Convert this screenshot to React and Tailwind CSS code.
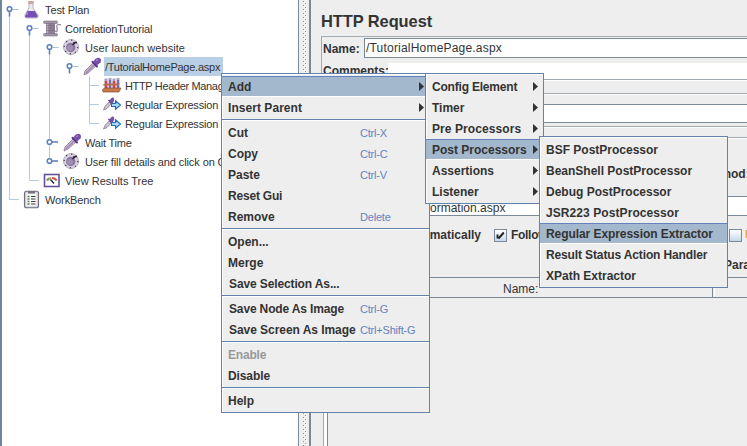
import React from "react";

function Flask() {
  return (
    <svg width="18" height="19" viewBox="0 0 18 19">
      <path d="M7 3V8L3 15Q2 18 5 18H14Q17 18 16 15L11 8V3Z" fill="#eeeaf2" stroke="#a9a0b5" strokeWidth=".8" />
      <path d="M5.4 11H12.7L15.5 15.6Q16 17.5 14 17.5H5Q2.6 17.5 3.4 15.4Z" fill="#7450b4" />
      <path d="M6 12.5L4.8 15" stroke="#b79ce0" />
      <path d="M6.2 1H11.8V4H6.2Z" fill="#c9a99b" />
    </svg>
  );
}

function Spool() {
  return (
    <svg width="20" height="19" viewBox="0 0 20 19">
      <path d="M13 12Q16 14 15 9T19 6" fill="none" stroke="#9d8fa4" strokeWidth="1.4" />
      <rect x="4" y="4" width="9" height="11" fill="#8f8096" />
      <path d="M5.5 4V15" stroke="#bdb1c2" strokeWidth="1.5" />
      <path d="M4 6.5H13M4 9H13M4 11.500H13" stroke="#75677e" strokeWidth=".6" />
      <rect x="1.500" y="2" width="14" height="2.500" rx="1" fill="#a296a9" stroke="#766b7f" strokeWidth=".6" />
      <rect x="1.500" y="14.500" width="14" height="2.500" rx="1" fill="#a296a9" stroke="#766b7f" strokeWidth=".6" />
    </svg>
  );
}

function Dial() {
  return (
    <svg width="18" height="19" viewBox="0 0 18 19">
      <circle cx="9" cy="9" r="7.600" fill="#d8d0df" stroke="#a59cae" strokeWidth=".7" />
      <circle cx="9" cy="9" r="6.800" fill="none" stroke="#352c40" strokeWidth="1.200" strokeDasharray="1.100 4.240" />
      <circle cx="8.700" cy="9.500" r="4.700" fill="#8a76a0" />
      <circle cx="8" cy="10" r="3" fill="#a08fb4" />
      <path d="M10.500 7L14.500 3.800M11 5L14.500 4.200" stroke="#241d2e" strokeWidth="1.200" />
    </svg>
  );
}

function Dropper() {
  return (
    <svg width="20" height="19" viewBox="0 0 20 19">
      <path d="M2 18L3 14L11 6L14 9L6 16Z" fill="#c6bcca" stroke="#82758d" strokeWidth=".8" />
      <path d="M4 16L12 8" stroke="#a582bc" strokeWidth="1.500" />
      <path d="M10.500 4.800L15 9.500" stroke="#55318e" strokeWidth="2" strokeLinecap="round" />
      <path d="M11.500 5Q13 .8 17 .8Q20 2 18.500 5.500L14.800 8.500Z" fill="#7650a8" />
      <path d="M14 4L16 2.500" stroke="#b79bd5" />
    </svg>
  );
}

function Tubes() {
  return (
    <svg width="20" height="19" viewBox="0 0 20 19">
      <path d="M4 2.500V14M8 2V14M12 2.500V14M16 2V14" stroke="#a9a0c0" strokeWidth="3" />
      <path d="M4 5V13M12 5V13" stroke="#d2424c" strokeWidth="2.400" />
      <path d="M8 4V13M16 4V13" stroke="#7769b5" strokeWidth="2" />
      <path d="M1 8.500L4 7.500H18L16 9.500H1Z" fill="#b86e45" />
      <path d="M.5 13.500L3 12H19L17 16H1Z" fill="#c47c4e" stroke="#8d4c31" strokeWidth=".7" />
    </svg>
  );
}

function Extract() {
  return (
    <svg width="20" height="19" viewBox="0 0 20 19">
      <path d="M1.500 15L3 11.500L7 7L9 9L5 13.500Z" fill="#cdc4d3" stroke="#83778d" strokeWidth=".8" />
      <path d="M6.500 5L11 9.500" stroke="#55338c" strokeWidth="1.500" />
      <path d="M7.500 6Q9 2 11.500 2.500Q13 5 11 8L10 9Z" fill="#7650a8" />
      <path d="M9.500 8.500H13.500V5.800L18.500 10L13.500 14.200V11.500H9.500Z" fill="#a9daf5" stroke="#2369b6" strokeWidth="1.100" />
    </svg>
  );
}

function Gauge() {
  return (
    <svg width="18" height="19" viewBox="0 0 18 19">
      <rect x="2.500" y="3.500" width="14.500" height="12" fill="#fff" stroke="#69509a" strokeWidth="1.600" />
      <path d="M5 9.500Q6.500 7.500 9 7" fill="none" stroke="#e58a4b" strokeWidth="2" />
      <path d="M5 9.500Q6 8 7 7.500" fill="none" stroke="#5aa67c" strokeWidth="2" />
      <path d="M10 7Q13 7 14.600 9.500" fill="none" stroke="#d0513e" strokeWidth="2" />
      <path d="M8.500 8.500L12 12.500" stroke="#222" strokeWidth="1.400" />
    </svg>
  );
}

function Clipboard() {
  return (
    <svg width="18" height="19" viewBox="0 0 18 19">
      <rect x="2.500" y="1.200" width="14" height="16.500" rx="2" fill="#dad7e0" stroke="#6f6b7c" strokeWidth="1.100" />
      <rect x="4.500" y="3.500" width="10" height="12.500" fill="#f8f8f6" />
      <rect x="6" y="1" width="7" height="2.500" fill="#777382" />
      <path d="M5.500 6.500H7.500M5.500 9H7.500M5.500 11.500H7.500M5.500 14H7.500" stroke="#567d50" strokeWidth="1.500" />
      <path d="M9 6.500H13.500M9 9H13.500M9 11.500H13.500M9 14H13.500" stroke="#3d3d45" strokeWidth="1.200" />
    </svg>
  );
}

const tree = [
  { icon: Flask, text: "Test Plan", pad: "pl-[22px]", fit: "tracking-[-0.1px]" },
  { icon: Spool, text: "CorrelationTutorial", pad: "pl-[42px]", fit: "tracking-[-0.15px]" },
  { icon: Dial, text: "User launch website", pad: "pl-[62px]", fit: "tracking-[0.05px]" },
  { icon: Dropper, text: "/TutorialHomePage.aspx", pad: "pl-[82px]", fit: "tracking-[-0.25px]", selected: true },
  { icon: Tubes, text: "HTTP Header Manager", pad: "pl-[102px]", fit: "tracking-[-0.35px]" },
  { icon: Extract, text: "Regular Expression Extractor", pad: "pl-[102px]", fit: "tracking-[-0.15px]" },
  { icon: Extract, text: "Regular Expression Extractor", pad: "pl-[102px]", fit: "tracking-[-0.15px]" },
  { icon: Dropper, text: "Wait Time", pad: "pl-[62px]", fit: "tracking-[-0.2px]" },
  { icon: Dial, text: "User fill details and click on Calculate", pad: "pl-[62px]", fit: "tracking-[-0.1px]" },
  { icon: Gauge, text: "View Results Tree", pad: "pl-[42px]", fit: "" },
  { icon: Clipboard, text: "WorkBench", pad: "pl-[22px]", fit: "tracking-[-0.1px]" },
];

function Connectors() {
  return (
    <svg className="absolute left-0 top-0" width="100" height="210" fill="none">
      <path
        d="M9.500 16V199.500H19M29.500 35V180.500H39M49.500 54V161M89.500 76V123.500H99M89.500 85.500H99M89.500 104.500H99"
        stroke="#b5cbd9"
      />
      {[[9.5, 9.5], [29.5, 28.5], [49.5, 47.5], [69.5, 66.5]].map(([x, y]) => (
        <g key={y}>
          <path d={`M${x + 3} ${y}H${x + 9}`} stroke="#a9bfd2" />
          <path d={`M${x} ${y + 2}V${y + 7}`} stroke="#5f83b8" strokeWidth="1.600" />
          <circle cx={x} cy={y - 0.5} r="2.300" fill="#fff" stroke="#5f83b8" strokeWidth="1.600" />
        </g>
      ))}
      {[142, 161].map((y) => (
        <g key={y}>
          <path d={`M51 ${y}H58`} stroke="#5f83b8" strokeWidth="1.600" />
          <circle cx="49.500" cy={y} r="2.300" fill="#fff" stroke="#5f83b8" strokeWidth="1.600" />
        </g>
      ))}
    </svg>
  );
}

function Tree() {
  return (
    <div className="relative h-full w-[299px] shrink-0 overflow-hidden border-r border-[#7a8a99] bg-white text-[11px]">
      <div className="absolute left-0 top-0 h-full w-[2px] bg-[#6c87a0]" />
      <Connectors />
      {tree.map(({ icon: Icon, text, pad, fit, selected }, i) => (
        <div key={i} className={`flex h-[19px] items-center ${pad}`}>
          <span className="flex w-[22px] shrink-0"><Icon /></span>
          <span className={`h-[19px] pl-px leading-[20px] ${fit} ${selected ? "bg-[#b8cfe5] pr-[3px]" : ""}`}>{text}</span>
        </div>
      ))}
    </div>
  );
}

function Splitter() {
  return (
    <div className="flex h-full w-[12px] shrink-0 border-r-2 border-[#7a8a99] bg-[#eeeeee] pl-[4px]">
      <svg width="6" height="446">
        <defs>
          <pattern id="bumps" width="4" height="4" patternUnits="userSpaceOnUse">
            <path d="M0 1h1v1H0zM2 3h1v1H2z" fill="#7f97b3" />
            <path d="M1 2h1v1H1zM3 0h1v1H3z" fill="#fff" />
          </pattern>
        </defs>
        <rect width="4" height="446" fill="url(#bumps)" />
      </svg>
    </div>
  );
}

function Check({ checked }) {
  return (
    <span className="flex size-[13px] shrink-0 items-center justify-center border border-[#7a8a99] bg-linear-to-b from-white to-[#c5d8ea]">
      {checked && (
        <svg width="9" height="9" viewBox="0 0 9 9">
          <path d="M1.500 3.500V7.500M2.500 7.500L7.800 1.500" stroke="#222" strokeWidth="1.900" />
        </svg>
      )}
    </span>
  );
}

function RequestPanel() {
  return (
    <div className="flex h-full min-w-0 flex-1 flex-col overflow-hidden whitespace-nowrap bg-[#eeeeee]">
      <div className="h-[36px] pl-[10px] text-[16.400px] font-bold leading-[42px] tracking-[-0.05px]">HTTP Request</div>
      <div className="ml-[10px] flex h-[43px] shrink-0 flex-col border-l border-t border-[#a3abb2] pl-px">
        <div className="flex h-[21px] items-start font-bold">
          <span className="w-[41px] pt-px leading-[22px]">Name:</span>
          <span className="mt-px h-[20px] flex-1 border border-r-0 border-[#7a8a99] bg-white pl-px font-normal leading-[19px] tracking-[0.2px]">/TutorialHomePage.aspx</span>
        </div>
        <div className="mt-[5px] flex h-[16px] font-bold">
          <span className="w-[65px] leading-[17px]">Comments:</span>
          <span className="flex-1 bg-white" />
        </div>
      </div>
      <div className="ml-[12px] h-[15px] shrink-0 border-y border-[#a3abb2] shadow-[inset_0_1px_#fff,0_1px_#fff]" />
      <div className="ml-[12px] mt-[10px] h-[19px] shrink-0 border-y border-[#7a8a99] bg-white" />
      <div className="ml-[12px] mt-[3px] h-[12px] shrink-0 border-y border-[#a3abb2] shadow-[inset_0_1px_#fff,0_1px_#fff]" />
      <div className="flex h-[58px] shrink-0 pl-[392px] font-bold">
        <span className="pt-[26px] leading-[20px]">Method:</span>
      </div>
      <div className="ml-[12px] h-[20px] shrink-0 border-y border-[#7a8a99] bg-white pl-[71px] leading-[22px]">/CarInformation.aspx</div>
      <div className="flex h-[38px] shrink-0 items-center pl-[63px] font-bold">
        <span className="w-[120px] shrink-0 pr-[13px] text-right">Automatically</span>
        <Check checked />
        <span className="w-[222px] shrink-0 pl-[4px] tracking-[-0.3px]">Follow Redirects</span>
        <Check />
        <span className="pl-[3px] text-[#e8a53a]">Use</span>
      </div>
      <div className="flex h-[23px] shrink-0 pl-[413px] font-bold">
        <span className="leading-[22px]">Parameters</span>
      </div>
      <div className="ml-[16px] flex h-[21px] shrink-0 border-y border-[#7a8a99]">
        <span className="w-[386px] border-r border-[#7a8a99] pl-[176px] leading-[22px]">Name:</span>
        <span className="ml-px flex-1 border-l border-white" />
      </div>
      <div className="ml-[12px] flex flex-1 border-l border-[#a3abb2] bg-white">
        <div className="ml-[3px] flex-1 border-l border-[#7a8a99] bg-[#eeeeee]" />
      </div>
    </div>
  );
}

function Item({ label, fit = "", keys, arrow, active, disabled }) {
  return (
    <div className={`flex h-[21px] items-center border-y pl-[6px] pr-[5px] font-bold ${active ? "border-t-[#6382bf] border-b-white bg-[#a3b8cc]" : "border-transparent"} ${disabled ? "text-[#999999]" : ""}`}>
      <span className={`h-[19px] leading-[20px] ${fit} ${keys ? "w-[132px]" : "flex-1"}`}>{label}</span>
      {keys && <span className="h-[19px] text-[11px] font-normal leading-[20px] tracking-[-0.2px] text-[#6382bf]">{keys}</span>}
      {arrow && (
        <svg width="5" height="9" viewBox="0 0 5 9"><path d="M0 0L5 4.500L0 9Z" fill="#333" /></svg>
      )}
    </div>
  );
}

function Menu({ place, items }) {
  return (
    <div className={`absolute whitespace-nowrap border border-[#6382ab] bg-[#eeeeee] pt-[2px] shadow-[inset_1px_1px_#fff] ${place}`}>
      {items.map((item, i) =>
        item ? <Item key={i} {...item} /> : <div key={i} className="mb-[2px] mt-px h-px bg-[#6382ab] shadow-[0_1px_#fff]" />
      )}
    </div>
  );
}

const mainMenu = [
  { label: "Add", arrow: true, active: true },
  { label: "Insert Parent", arrow: true, fit: "tracking-[0.05px]" },
  null,
  { label: "Cut", keys: "Ctrl-X" },
  { label: "Copy", keys: "Ctrl-C" },
  { label: "Paste", keys: "Ctrl-V" },
  { label: "Reset Gui", fit: "tracking-[-0.2px]" },
  { label: "Remove", keys: "Delete" },
  null,
  { label: "Open..." },
  { label: "Merge" },
  { label: "Save Selection As...", fit: "pl-px tracking-[-0.12px]" },
  null,
  { label: "Save Node As Image", keys: "Ctrl-G", fit: "pl-px tracking-[-0.15px]" },
  { label: "Save Screen As Image", keys: "Ctrl+Shift-G", fit: "pl-px tracking-[-0.05px]" },
  null,
  { label: "Enable", disabled: true, fit: "tracking-[-0.2px]" },
  { label: "Disable", fit: "tracking-[-0.1px]" },
  null,
  { label: "Help" },
];

const addMenu = [
  { label: "Config Element", arrow: true, fit: "tracking-[-0.2px]" },
  { label: "Timer", arrow: true },
  { label: "Pre Processors", arrow: true, fit: "tracking-[0.08px]" },
  { label: "Post Processors", arrow: true, active: true },
  { label: "Assertions", arrow: true },
  { label: "Listener", arrow: true },
];

const postMenu = [
  { label: "BSF PostProcessor" },
  { label: "BeanShell PostProcessor" },
  { label: "Debug PostProcessor" },
  { label: "JSR223 PostProcessor", fit: "tracking-[0.08px]" },
  { label: "Regular Expression Extractor", active: true, fit: "tracking-[-0.07px]" },
  { label: "Result Status Action Handler", fit: "tracking-[-0.13px]" },
  { label: "XPath Extractor" },
];

export default function App() {
  return (
    <div className="relative flex h-[446px] w-[747px] overflow-hidden whitespace-nowrap bg-[#eeeeee] font-['Liberation_Sans',Arial,sans-serif] text-[12px] text-[#333333]">
      <Tree />
      <Splitter />
      <RequestPanel />
      <Menu place="left-[221px] top-[73px] h-[340px] w-[209px]" items={mainMenu} />
      <Menu place="left-[425px] top-[73px] h-[131px] w-[119px]" items={addMenu} />
      <Menu place="left-[539px] top-[136px] h-[152px] w-[189px]" items={postMenu} />
    </div>
  );
}
